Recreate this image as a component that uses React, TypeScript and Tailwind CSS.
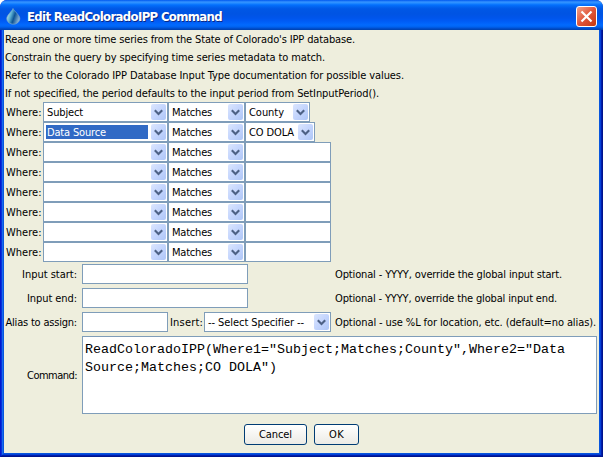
import { useLayoutEffect, useRef, useState } from 'react';

type TextProps = { children: string; w: number; className?: string };

// Text whose tracking is fitted to a fixed width.
function Fit({ children, w, className = 'pt-0.5' }: TextProps) {
  const ref = useRef<HTMLSpanElement>(null);
  const [spacing, setSpacing] = useState(0);
  useLayoutEffect(() => {
    if (ref.current) {
      const natural = ref.current.getBoundingClientRect().width - spacing * children.length;
      setSpacing((w - natural) / children.length);
    }
  }, [children, w]);
  return (
    <span ref={ref} className={`inline-block shrink-0 whitespace-pre ${className}`} style={{ letterSpacing: `${spacing}px` }}>
      {children}
    </span>
  );
}

function Arrow() {
  return (
    <span className="flex h-4 w-[15px] shrink-0 items-center justify-center rounded-[2px] bg-linear-to-br from-[#dbe6fe] via-[#c4d5fd] to-[#aec6f7]">
      <svg width="9" height="7" viewBox="0 0 9 7" fill="none" stroke="#4d6185" strokeWidth="2.1">
        <path d="M0.8 1.2 L4.5 4.9 L8.2 1.2" />
      </svg>
    </span>
  );
}

function Combo({ text, tw, className, selected = false }: { text: string; tw: number; className: string; selected?: boolean }) {
  return (
    <div className={`flex h-5 shrink-0 items-center border border-[#7f9db9] bg-white pr-px pl-0.5 ${className}`}>
      <div className={`mr-[3px] flex h-3.5 flex-1 items-center pl-px ${selected ? 'bg-[#316ac5] text-white' : ''}`}>
        {text && <Fit w={tw}>{text}</Fit>}
      </div>
      <Arrow />
    </div>
  );
}

const field = 'h-5 shrink-0 border border-[#7f9db9] bg-white';

const rows = [
  { subject: 'Subject', sw: 36, value: 'County', vw: 35, width: 'w-[65px]' },
  { subject: 'Data Source', sw: 59, value: 'CO DOLA', vw: 45, width: 'w-[70px]' },
  { subject: '', sw: 0, value: '', vw: 0, width: '' },
  { subject: '', sw: 0, value: '', vw: 0, width: '' },
  { subject: '', sw: 0, value: '', vw: 0, width: '' },
  { subject: '', sw: 0, value: '', vw: 0, width: '' },
  { subject: '', sw: 0, value: '', vw: 0, width: '' },
  { subject: '', sw: 0, value: '', vw: 0, width: '' },
];

const intro = [
  { text: "Read one or more time series from the State of Colorado's IPP database.", w: 350 },
  { text: 'Constrain the query by specifying time series metadata to match.', w: 320 },
  { text: 'Refer to the Colorado IPP Database Input Type documentation for possible values.', w: 399 },
  { text: 'If not specified, the period defaults to the input period from SetInputPeriod().', w: 374 },
];

function Label({ children, w }: { children: string; w: number }) {
  return (
    <div className="flex w-[78px] shrink-0 justify-end pr-[5px]">
      <Fit w={w}>{children}</Fit>
    </div>
  );
}

export default function App() {
  return (
    <div className="h-[457px] w-[603px] overflow-hidden bg-white">
      <div className="flex h-full w-full flex-col overflow-hidden rounded-t-[7px] bg-linear-to-r from-[#0019cf] via-[#0855dd] to-[#001590] font-['DejaVu_Sans_Condensed','DejaVu_Sans',sans-serif] text-[11px] leading-[14px] text-black [font-stretch:condensed]">
        <header className="flex h-[30px] shrink-0 items-center justify-between bg-[linear-gradient(180deg,#0058ee_0px,#3593ff_2px,#288eff_3px,#127dff_4px,#036ffc_5px,#0262ee_7px,#0057e5_9px,#0054e3_14px,#0055eb_18px,#005bf5_21px,#026afe_25px,#0062ef_27px,#0052d6_28px,#0040ab_30px)] pr-[6px] pl-[6px]">
          <div className="flex items-center pt-[3px]">
            <svg width="15" height="17" viewBox="0 0 15 17" className="mr-[6px]">
              <defs>
                <linearGradient id="drop" x1="0" y1="0.2" x2="1" y2="0.6">
                  <stop offset="0" stopColor="#d2f2f4" />
                  <stop offset="0.35" stopColor="#58aed2" />
                  <stop offset="0.6" stopColor="#0c5396" />
                  <stop offset="1" stopColor="#8fb8d8" />
                </linearGradient>
              </defs>
              <path d="M7 0.5 C8 3 13.8 7 13.8 10.5 C13.8 14 10.5 16.2 7.5 16.2 C4 16.2 0.8 14 0.8 10.5 C0.8 7 6 3.5 7 0.5 Z" fill="url(#drop)" stroke="#7fa9cc" strokeWidth="0.7" />
            </svg>
            <Fit w={195} className="text-[13px] leading-4 font-bold text-white [text-shadow:1px_1px_0_#0c2a86]">
              Edit ReadColoradoIPP Command
            </Fit>
          </div>
          <button className="mt-[3px] flex h-[21px] w-[21px] items-center justify-center rounded-[3px] border border-white bg-linear-to-br from-[#f0a088] via-[#e0553a] to-[#c73705]">
            <svg width="13" height="13" viewBox="0 0 13 13" stroke="white" strokeWidth="2.2" fill="none">
              <path d="M1.5 1.5 L11.5 11.5 M11.5 1.5 L1.5 11.5" />
            </svg>
          </button>
        </header>
        <div className="flex min-h-0 flex-1 border-x border-b border-r-[#00138c] border-b-[#00138c] border-l-[#0019cf]">
          <div className="flex min-w-0 flex-1 border-x border-b border-r-[#001dab] border-b-[#001dab] border-l-[#0831d9]">
            <div className="flex min-w-0 flex-1 border-x border-b border-[#0441d8] border-l-[#166aee]">
              <div className="flex min-w-0 flex-1 border-x border-b border-[#0855dd]">
                <main className="flex min-w-0 flex-1 flex-col bg-[#eeeedd]">
                  <div className="pl-px">
                    {intro.map((line) => (
                      <div key={line.text} className="flex h-[18px] items-center">
                        <Fit w={line.w}>{line.text}</Fit>
                      </div>
                    ))}
                  </div>
                  {rows.map((row, i) => (
                    <div key={i} className="flex h-5 items-center pl-0.5">
                      <div className="flex w-[37px] shrink-0">
                        <Fit w={35.5}>Where:</Fit>
                      </div>
                      <Combo text={row.subject} tw={row.sw} selected={i === 1} className="w-[125px]" />
                      <Combo text="Matches" tw={40} className="w-[77px]" />
                      {row.value ? (
                        <Combo text={row.value} tw={row.vw} className={row.width} />
                      ) : (
                        <div className={`${field} w-[86px]`} />
                      )}
                    </div>
                  ))}
                  <div className="mt-0.5 flex items-center">
                    <Label w={55}>Input start:</Label>
                    <div className={`${field} w-[166px]`} />
                    <div className="ml-[87px] flex"><Fit w={227}>Optional - YYYY, override the global input start.</Fit></div>
                  </div>
                  <div className="mt-1 flex items-center">
                    <Label w={50}>Input end:</Label>
                    <div className={`${field} w-[166px]`} />
                    <div className="ml-[87px] flex"><Fit w={222}>Optional - YYYY, override the global input end.</Fit></div>
                  </div>
                  <div className="mt-1 flex items-center">
                    <Label w={71.5}>Alias to assign:</Label>
                    <div className={`${field} w-[86px]`} />
                    <div className="flex w-9 pl-0.5"><Fit w={33}>Insert:</Fit></div>
                    <Combo text="-- Select Specifier --" tw={96} className="w-[127px]" />
                    <div className="ml-1 flex"><Fit w={261}>Optional - use %L for location, etc. (default=no alias).</Fit></div>
                  </div>
                  <div className="mt-1 flex items-center">
                    <Label w={50}>Command:</Label>
                    <div className="h-[78px] w-[515px] shrink-0 border border-[#7f9db9] bg-white pt-1 pl-[2px] font-['Liberation_Mono',monospace] text-[13.333px] leading-[18px]">
                      <Fit w={480} className="block w-max">{'ReadColoradoIPP(Where1="Subject;Matches;County",Where2="Data'}</Fit>
                      <Fit w={192} className="block w-max">{'Source;Matches;CO DOLA")'}</Fit>
                    </div>
                  </div>
                  <div className="mt-[10px] flex gap-[7px] pl-[240px]">
                    <button className="flex h-[21px] w-[63px] items-center justify-center rounded-[3px] border border-[#003c74] bg-linear-to-b from-white to-[#ecebe5]">
                      <Fit w={33} className="">Cancel</Fit>
                    </button>
                    <button className="flex h-[21px] w-[45px] items-center justify-center rounded-[3px] border border-[#003c74] bg-linear-to-b from-white to-[#ecebe5]">
                      <Fit w={15} className="">OK</Fit>
                    </button>
                  </div>
                </main>
              </div>
            </div>
          </div>
        </div>
      </div>
    </div>
  );
}
